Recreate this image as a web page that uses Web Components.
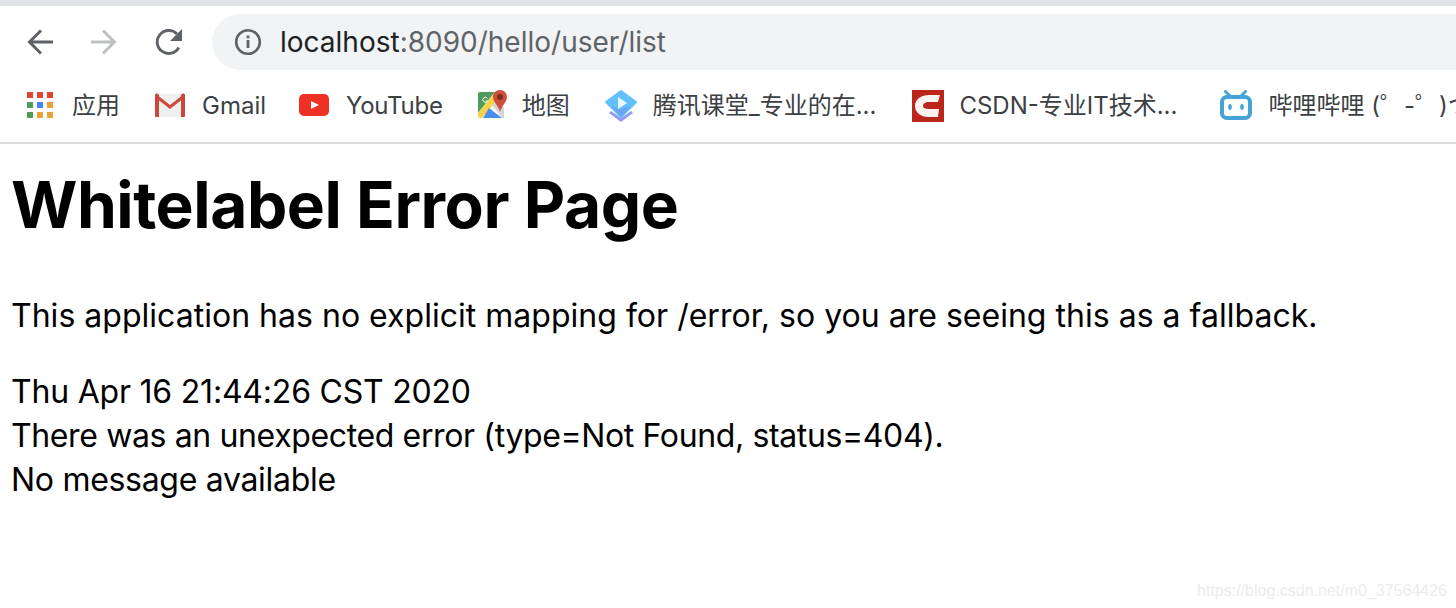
<!DOCTYPE html>
<html lang="en">
<head>
<meta charset="utf-8">
<title>Whitelabel Error Page</title>
<style>
  html, body { margin: 0; height: 100%; background: #fff; overflow: hidden; }
  body { font-family: Inter, "Liberation Sans", "Noto Sans CJK SC", sans-serif; }
</style>
</head>
<body>

<browser-toolbar>
  <nav-button slot="nav">
    <svg width="26" height="26" viewBox="0 0 26 26" fill="none" stroke="#5f6368" stroke-width="3"><path d="M26 13H3M14 1.500L2.500 13 14 24.500"/></svg>
  </nav-button>
  <nav-button slot="nav" style="margin-left:38px">
    <svg width="26" height="26" viewBox="0 0 26 26" fill="none" stroke="#bdc1c6" stroke-width="3"><path d="M0 13H23M12 1.500L23.500 13 12 24.500"/></svg>
  </nav-button>
  <nav-button slot="nav" style="margin-left:38px">
    <svg width="27" height="26" viewBox="0 0 27 26" fill="none"><path d="M23.800 18.500A11.500 11.500 0 1 1 22 5" stroke="#5f6368" stroke-width="2.800"/><path d="M27 0V12H15z" fill="#5f6368"/></svg>
  </nav-button>
  <omni-box>
    <span>localhost</span><span style="color:#5f6368">:8090/hello/user/list</span>
  </omni-box>
</browser-toolbar>

<bookmark-bar>
  <bookmark-item label="应用" style="--gap:19px">
    <svg slot="icon" width="26" height="26" viewBox="0 0 26 26">
      <rect x="0" y="0" width="6" height="6" fill="#e34133"/><rect x="10" y="0" width="6" height="6" fill="#e34133"/><rect x="20" y="0" width="6" height="6" fill="#e34133"/>
      <rect x="0" y="10" width="6" height="6" fill="#4f9d5d"/><rect x="10" y="10" width="6" height="6" fill="#4285f4"/><rect x="20" y="10" width="6" height="6" fill="#e8a33a"/>
      <rect x="0" y="20" width="6" height="6" fill="#4f9d5d"/><rect x="10" y="20" width="6" height="6" fill="#e8a33a"/><rect x="20" y="20" width="6" height="6" fill="#e8a33a"/>
    </svg>
  </bookmark-item>
  <bookmark-item label="Gmail" style="margin-left:35px">
    <svg slot="icon" width="30" height="24" viewBox="0 0 30 24">
      <path d="M1 1H29V24H1z" fill="#efefef"/>
      <path d="M1 1L15 12 29 1V5L15 16 1 5z" fill="#cf4a3d"/>
      <path d="M0 2Q0 0 2.500 .5L4 2V24H1Q0 24 0 23zM30 2Q30 0 27.500 .5L26 2V24H29Q30 24 30 23z" fill="#c8483c"/>
    </svg>
  </bookmark-item>
  <bookmark-item label="YouTube" style="margin-left:33px;--track:-0.25px">
    <svg slot="icon" width="30" height="22" viewBox="0 0 30 22"><rect width="30" height="22" rx="5" fill="#ee3124"/><path d="M12 7l8 4-8 4z" fill="#fff"/></svg>
  </bookmark-item>
  <bookmark-item label="地图" style="margin-left:35px;--gap:14px">
    <svg slot="icon" width="30" height="30" viewBox="0 0 30 30">
      <path d="M0 4Q0 2 2 2H17L0 23z" fill="#4c9d5b"/>
      <path d="M0 23L17 2H20V9L4 28H2Q0 28 0 26z" fill="#f5d34b"/>
      <path d="M11 18L24 28H5z" fill="#4b8ef0"/>
      <path d="M14 15L20 9 26 18V28H24z" fill="#d5d5d5"/>
      <path d="M22 0C17.800 0 15 3 15 7C15 12 20 15 22 22C24 15 29 12 29 7C29 3 26.200 0 22 0z" fill="#cf4f3e"/>
      <circle cx="22" cy="7" r="3" fill="#7d2c22"/>
      <path d="M9.500 8.500A2.500 2.500 0 1 0 9.500 11H7.500" fill="none" stroke="#fff" stroke-width="1"/>
    </svg>
  </bookmark-item>
  <bookmark-item label="腾讯课堂_专业的在..." style="margin-left:35px;--gap:16px">
    <svg slot="icon" width="32" height="32" viewBox="0 0 32 32" style="margin-top:2px">
      <path d="M6 21L16 28 26 21 28 23 16 32 4 23z" fill="#8f9bf5"/>
      <path d="M16 1L31 12 16 27 1 12z" fill="#62c1fb" stroke="#62c1fb" stroke-width="2" stroke-linejoin="round"/>
      <path d="M16 19L26 16 16 27 6 16z" fill="#6aa6f8"/>
      <path d="M13 7L22 13 13 19z" fill="#eaf7ff"/>
    </svg>
  </bookmark-item>
  <bookmark-item label="CSDN-专业IT技术..." style="margin-left:36px;--gap:15px">
    <svg slot="icon" width="32" height="32" viewBox="0 0 32 32" style="margin-top:2px">
      <rect width="32" height="32" fill="#ba2619"/>
      <path d="M28 5H17C8 5 3 10 3 16C3 22 8 27 17 27H26L27 19H17C13 19 11 18 11 16C11 14 13 12 17 12H26z" fill="#fbf3f0"/>
    </svg>
  </bookmark-item>
  <bookmark-item label="哔哩哔哩 (゜-゜)つ" style="margin-left:43px;--gap:16px">
    <svg slot="icon" width="32" height="30" viewBox="0 0 32 30">
      <path d="M5.500 1.500L10 6M25.500 1.500L21 6" stroke="#46a3d6" stroke-width="3" stroke-linecap="round"/>
      <rect x="2" y="7" width="28" height="21" rx="5" fill="#fff" stroke="#46a3d6" stroke-width="4"/>
      <ellipse cx="10" cy="17" rx="1.800" ry="3" fill="#46a3d6"/><ellipse cx="22" cy="17" rx="1.800" ry="3" fill="#46a3d6"/>
    </svg>
  </bookmark-item>
</bookmark-bar>

<error-page>
  <span slot="title">Whitelabel Error Page</span>
  <span slot="note">This application has no explicit mapping for /error, so you are seeing this as a fallback.</span>
  <span slot="details" style="letter-spacing:-0.21px">Thu Apr 16 21:44:26 CST 2020</span>
  <span slot="details" style="letter-spacing:-0.37px">There was an unexpected error (type=Not Found, status=404).</span>
  <span slot="details" style="letter-spacing:-0.3px">No message available</span>
</error-page>

<water-mark>https://blog.csdn.net/m0_37564426</water-mark>

<script>
function define(name, html) {
  customElements.define(name, class extends HTMLElement {
    constructor() {
      super();
      this.attachShadow({ mode: 'open' }).innerHTML = html;
    }
  });
}

define('browser-toolbar', `
  <style>
    :host { display: flex; align-items: center; height: 56px; padding: 8px 0 10px 27px;
      border-top: 6px solid #dee1e6; }
    .nav { display: flex; align-items: center; margin-right: 30px; }
  </style>
  <div class="nav"><slot name="nav"></slot></div>
  <slot></slot>
`);

define('nav-button', `
  <style>
    :host { display: inline-flex; }
    ::slotted(svg) { display: block; }
  </style>
  <slot></slot>
`);

define('omni-box', `
  <style>
    :host { display: flex; align-items: center; flex: 1; height: 56px; background: #f1f3f4;
      border-radius: 28px 0 0 28px; padding-left: 22px; gap: 18px;
      font-size: 28px; color: #202124; }
    svg { flex: none; }
  </style>
  <svg width="28" height="28" viewBox="0 0 28 28" fill="none">
    <circle cx="14" cy="14" r="11.800" stroke="#5f6368" stroke-width="2.600"/>
    <rect x="12.600" y="12" width="2.800" height="8" fill="#5f6368"/>
    <rect x="12.600" y="7.500" width="2.800" height="2.800" fill="#5f6368"/>
  </svg>
  <div><slot></slot></div>
`);

define('bookmark-bar', `
  <style>
    :host { display: flex; align-items: center; height: 50px; padding: 0 0 12px 27px;
      border-bottom: 2px solid #dadce0; white-space: nowrap; overflow: hidden; }
  </style>
  <slot></slot>
`);

customElements.define('bookmark-item', class extends HTMLElement {
  constructor() {
    super();
    this.attachShadow({ mode: 'open' }).innerHTML = `
      <style>
        :host { display: inline-flex; align-items: center; gap: var(--gap, 17px); flex: none;
          font-size: 24px; line-height: 30px; color: #3c4043; }
        ::slotted(svg) { display: block; flex: none; }
        span { position: relative; top: 1px; letter-spacing: var(--track, 0); }
      </style>
      <slot name="icon"></slot><span></span>
    `;
    this.shadowRoot.querySelector('span').textContent = this.getAttribute('label');
  }
});

define('error-page', `
  <style>
    :host { display: block; padding: 0 12px 0 11px; color: #000; font-size: 32px; line-height: 44px; }
    h1 { font-size: 64px; line-height: 70px; font-weight: 700; margin: 26px 0 0; letter-spacing: -0.45px; }
    p { margin: 0; }
    .note { margin-top: 54px; letter-spacing: 0.02px; }
    .details { margin-top: 32px; display: flex; flex-direction: column; }
  </style>
  <h1><slot name="title"></slot></h1>
  <p class="note"><slot name="note"></slot></p>
  <div class="details"><slot name="details"></slot></div>
`);

define('water-mark', `
  <style>
    :host { position: absolute; right: 9px; bottom: 8px; font: 16px "Liberation Sans", sans-serif; color: #ececec; }
  </style>
  <slot></slot>
`);
</script>
</body>
</html>
